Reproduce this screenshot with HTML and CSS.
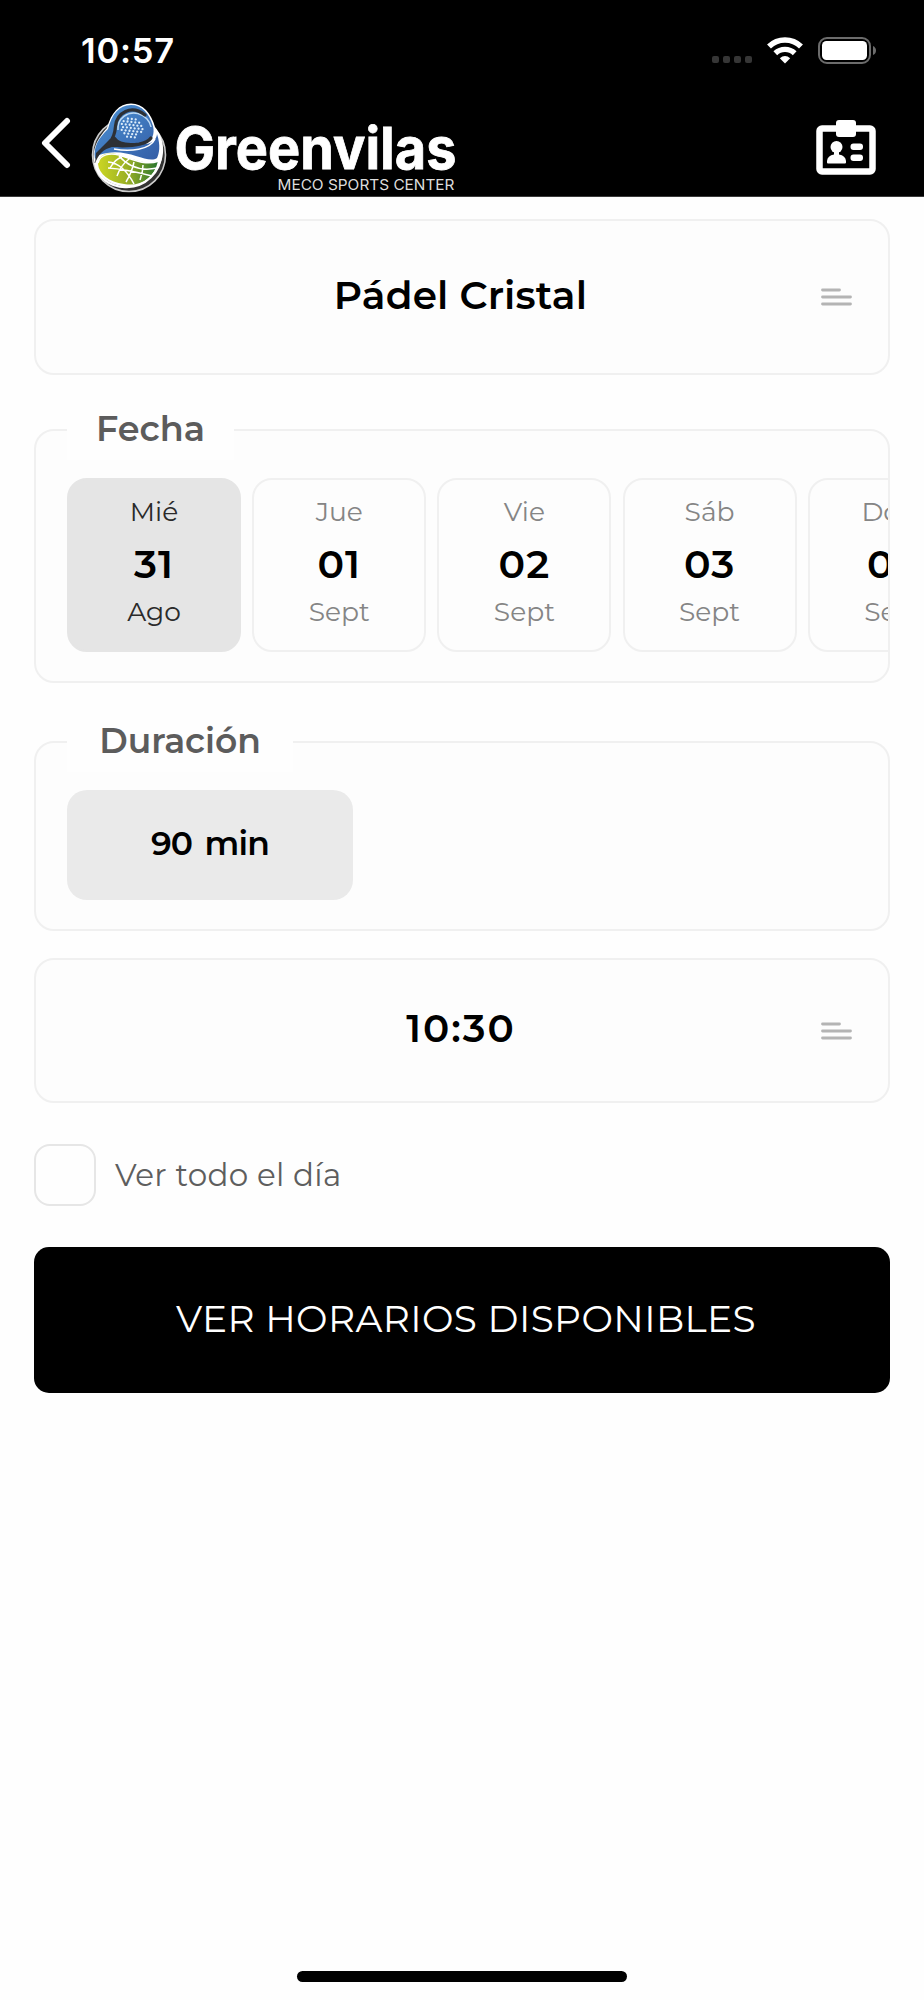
FILE: index.html
```html
<!DOCTYPE html>
<html lang="es">
<head>
<meta charset="utf-8">
<title>Greenvilas</title>
<link rel="stylesheet" href="styles.css">
</head>
<body>
<header class="header">
  <div class="status">
    <span class="clock">10:57</span>
    <div class="status-icons">
      <div class="dots"><i></i><i></i><i></i><i></i></div>
      <svg class="wifi" width="36" height="27" viewBox="0 0 36 27" fill="none" stroke="#fff">
        <path d="M2 9.500A23 23 0 0 1 34 9.500" stroke-width="5.600"/>
        <path d="M8.300 16.300A14 14 0 0 1 27.700 16.300" stroke-width="5.400"/>
        <path d="M18 26.500L12.800 21.200Q18 17 23.200 21.200Z" fill="#fff" stroke="none"/>
      </svg>
      <svg width="59" height="27" viewBox="0 0 59 27">
        <rect x="1" y="1" width="51" height="25" rx="8" fill="none" stroke="#6c6c6c" stroke-width="2"/>
        <rect x="4" y="4" width="45" height="19" rx="4.500" fill="#fff"/>
        <path d="M55 9q3 1.500 3 4.500t-3 4.500z" fill="#6c6c6c"/>
      </svg>
    </div>
  </div>
  <div class="navbar">
    <svg class="back" width="30" height="52" viewBox="0 0 30 52" fill="none" stroke="#fff" stroke-width="6" stroke-linecap="round" stroke-linejoin="round"><path d="M26 4L4 26L26 48"/></svg>
    <svg class="logo" width="370" height="94" viewBox="90 100 370 94">
      <defs>
        <linearGradient id="blue" x1="0" x2="1" y1="0" y2="1"><stop offset="0" stop-color="#4b92d4"/><stop offset="1" stop-color="#345da6"/></linearGradient>
        <linearGradient id="green"><stop offset="0" stop-color="#ccd622"/><stop offset=".5" stop-color="#98af25"/><stop offset="1" stop-color="#28752f"/></linearGradient>
      </defs>
      <circle cx="129" cy="155" r="36.500" fill="#333" stroke="#ccc" stroke-width="1.600"/>
      <path d="M131 103.500C143 103.500 151 113 155 127C165 139 166 157 157 170C149 183 135 189 121 186C105 183 94 171 93.500 156C94 145 99 137 107 128C111 113 119 103.500 131 103.500Z" fill="#fff"/>
      <path d="M131 105C142 105 149 113 153 126C155 134 152 141 145 144C154 144 157 137 157 134C161 146 159 154 157 158C147 165 126 145 99 155L95 159C93 146 99 138 108 129C112 114 119 105 131 105Z" fill="url(#blue)"/>
      <path d="M118 130C117 118 128 111 138 113.500C145 115.500 150 121 151 127" fill="none" stroke="#bcd9f3" stroke-width="1.500"/>
      <path d="M145 115C131 104 117 113 115.500 126C115 134 113 139 109 143M114 138C118 144 128 145.500 139 144C145 143 149 141 151 138" fill="none" stroke="#2d3035" stroke-width="3.200" stroke-linecap="round"/>
      <path d="M110 139L96 153L95 164C98 154 104 149 112 147C120 147.500 132 148 142 145L122 143L114 138Z" fill="#2d3035"/>
      <path d="M114 149C130 152 150 150 155 139" fill="none" stroke="#fff" stroke-width="1.500"/>
      <g fill="none" stroke="#dcecfa" stroke-width="2.300" stroke-linecap="round" stroke-dasharray="0 3.900">
        <path d="M127 119H137M123 122H141M121.500 125H143M123 128H143M122 131H142M125 134H139M128 137H136" transform="rotate(6 132 128)"/>
      </g>
      <path d="M98 164C98 154 109 151 120 155C135 160 145 165 158 161C154 179 140 187 124 184C109 182 99 174 98 164Z" fill="url(#green)"/>
      <path d="M98 163C100 154 110 153 119 155C135 160 145 166 159 161M110 168Q115 159 122 157M117 176Q121 165 129 159M126 182Q132 172 134 162M140 180Q143 172 143 165M108 162Q123 163 134 184M108 168Q125 169 152 176M119 156Q134 173 157 168" fill="none" stroke="#fff" stroke-width="1.500"/>
      <path d="M95 163C98 178 110 187 125 187C145 188 161 172 161 153" fill="none" stroke="#fff" stroke-width="2.400"/>
      <text class="brand" x="174.500" y="169" textLength="282" lengthAdjust="spacingAndGlyphs">Greenvilas</text>
      <text class="tagline" x="277.500" y="190" textLength="177" lengthAdjust="spacingAndGlyphs">MECO SPORTS CENTER</text>
    </svg>
    <svg class="badge" width="60" height="56" viewBox="0 0 60 56" fill="#fff">
      <rect x="3.500" y="8.500" width="53" height="43" rx="2.500" fill="none" stroke="#fff" stroke-width="6.500"/>
      <rect x="20" y="0" width="20" height="17" rx="3"/>
      <circle cx="20.500" cy="27" r="6"/>
      <path d="M18 29h5v5.500q6.500 1 7 6.500v1.500q0 1-1 1h-17q-1 0-1-1v-1.500q.5-5.500 7-6.500z"/>
      <rect x="34.500" y="23.500" width="12.500" height="6.500" rx="3"/>
      <rect x="34.500" y="34.500" width="12.500" height="6.500" rx="3"/>
    </svg>
  </div>
</header>
<main class="main">
  <div class="select court">
    <span class="value">Pádel Cristal</span>
    <svg class="lines" width="31" height="18" viewBox="0 0 31 18" stroke="#b4b4b4" stroke-width="2.800" stroke-linecap="round"><path d="M1.500 2H18.500M1.500 9H29.500M1.500 16H29.500"/></svg>
  </div>
  <section class="group dates">
    <h2 class="legend legend-date">Fecha</h2>
    <div class="days">
      <div class="day selected"><span>Mié</span><b>31</b><span>Ago</span></div>
      <div class="day"><span>Jue</span><b>01</b><span>Sept</span></div>
      <div class="day"><span>Vie</span><b>02</b><span>Sept</span></div>
      <div class="day"><span>Sáb</span><b>03</b><span>Sept</span></div>
      <div class="day"><span>Dom</span><b>04</b><span>Sept</span></div>
    </div>
  </section>
  <section class="group duration">
    <h2 class="legend legend-duration">Duración</h2>
    <div class="option">90 min</div>
  </section>
  <div class="select time">
    <span class="value">10:30</span>
    <svg class="lines" width="31" height="18" viewBox="0 0 31 18" stroke="#b4b4b4" stroke-width="2.800" stroke-linecap="round"><path d="M1.500 2H18.500M1.500 9H29.500M1.500 16H29.500"/></svg>
  </div>
  <label class="check"><span class="box"></span><span class="check-label">Ver todo el día</span></label>
  <div class="submit"><span>VER HORARIOS DISPONIBLES</span></div>
</main>
<div class="home"></div>
</body>
</html>
```
FILE: styles.css
```css
* { box-sizing: border-box; }
body {
  margin: 0;
  height: 2000px;
  display: flex;
  flex-direction: column;
  background: #fefefe;
  color: #000;
  font-family: Montserrat, Inter, sans-serif;
  overflow: hidden;
}
.header { height: 197px; background: #000; color: #fff; border-bottom: 1px solid #3a3a3a; }
.status { height: 100px; display: flex; justify-content: space-between; padding: 0 47px 0 81px; }
.clock { font: 600 34.5px/102px Inter, sans-serif; letter-spacing: 0.8px; }
.status-icons { display: flex; align-items: flex-start; padding-top: 37px; }
.dots { display: flex; gap: 4px; padding: 19px 15px 0 0; }
.dots i { width: 7px; height: 7px; border-radius: 2px; background: #363636; }
.wifi { margin-right: 15px; }
.navbar { display: flex; padding-left: 41px; }
.back { margin-top: 17px; }
.logo { margin-left: 19px; }
.badge { margin: 20px 48px 0 auto; }
.brand { font: 700 58px Inter, sans-serif; fill: #fff; stroke: #fff; stroke-width: 0.8px; }
.tagline { font: 400 14.5px Inter, sans-serif; fill: #ddd; }
.main { padding: 22px 34px 0; }
.select {
  display: grid;
  grid-template-columns: 67px 1fr 67px;
  align-items: center;
  padding: 0 0 5px;
  border: 2px solid #f0f0f0;
  border-radius: 20px;
  background: #fdfdfd;
}
.value { grid-column: 2; text-align: center; font-size: 39px; font-weight: 600; letter-spacing: 0.2px; }
.court .value { padding-right: 3px; }
.time .value { padding-right: 2px; letter-spacing: 2px; }
.select .lines { margin-top: 5px; }
.court { height: 156px; }
.time { height: 145px; margin-top: 27px; }
.group { border: 2px solid #f0f0f0; border-radius: 20px; background: #fdfdfd; padding-left: 31px; }
.dates { height: 254px; margin-top: 54px; }
.duration { height: 190px; margin-top: 58px; }
.legend {
  height: 62px;
  margin: -33px 0 18px;
  background: #fefefe;
  color: #5c5c5c;
  text-align: center;
  font-size: 35px;
  font-weight: 600;
  line-height: 61px;
}
.legend-date { width: 167px; }
.legend-duration { width: 226px; font-size: 34.5px; line-height: 63px; }
.days { display: flex; gap: 11.2px; overflow: hidden; }
.day {
  flex: 0 0 174px;
  height: 174px;
  padding-top: 12px;
  border: 2px solid #f0f0f0;
  border-radius: 20px;
  display: flex;
  flex-direction: column;
  text-align: center;
  color: #858585;
  font-size: 26.5px;
  font-weight: 400;
}
.day span { line-height: 40px; }
.day b { color: #000; font-size: 39.5px; font-weight: 600; line-height: 64px; letter-spacing: 1px; }
.day span:last-child { line-height: 32px; }
.selected { background: #e5e5e5; border-color: #e5e5e5; color: #2a2a2a; }
.option {
  width: 286px;
  height: 110px;
  border-radius: 20px;
  background: #eaeaea;
  text-align: center;
  font-size: 33px;
  font-weight: 600;
  word-spacing: 4px;
  letter-spacing: -0.8px;
  line-height: 106px;
}
.check { display: flex; align-items: center; margin-top: 41px; }
.box { width: 62px; height: 62px; border: 2px solid #e6e6e6; border-radius: 16px; }
.check-label { margin: -1px 0 0 19px; font-size: 31px; font-weight: 400; color: #5e5e5e; letter-spacing: 0.3px; }
.submit {
  height: 146px;
  margin-top: 41px;
  padding-left: 8px;
  border-radius: 15px;
  background: #000;
  color: #fff;
  text-align: center;
  font-size: 37.5px;
  font-weight: 400;
  letter-spacing: 0.4px;
  line-height: 143px;
}
.home { width: 330px; height: 11px; margin: auto auto 18px; border-radius: 6px; background: #000; }
```
